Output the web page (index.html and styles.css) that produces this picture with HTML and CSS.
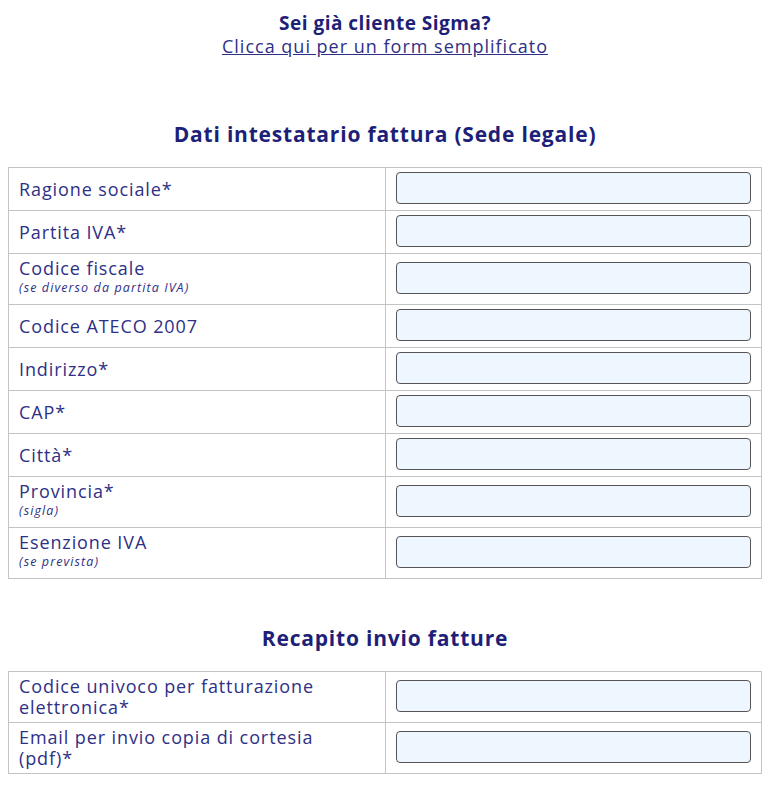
FILE: index.html
```html
<!DOCTYPE html>
<html lang="it">
<head>
  <meta charset="UTF-8" />
  <meta name="viewport" content="width=device-width, initial-scale=1.0" />
  <title>Dati fatturazione</title>
  <link rel="stylesheet" href="styles.css">
</head>
<body>
  <div class="intro">
    <div class="intro-title">Sei già cliente Sigma?</div>
    <a href="#" class="intro-link">Clicca qui per un form semplificato</a>
  </div>

  <h2 class="section-title first">Dati intestatario fattura (Sede legale)</h2>
  <table class="form-table">
    <tr>
      <td class="label">Ragione sociale*</td>
      <td class="field"><input type="text" /></td>
    </tr>
    <tr>
      <td class="label">Partita IVA*</td>
      <td class="field"><input type="text" /></td>
    </tr>
    <tr>
      <td class="label">Codice fiscale<span class="note">(se diverso da partita IVA)</span></td>
      <td class="field"><input type="text" /></td>
    </tr>
    <tr>
      <td class="label">Codice ATECO 2007</td>
      <td class="field"><input type="text" /></td>
    </tr>
    <tr>
      <td class="label">Indirizzo*</td>
      <td class="field"><input type="text" /></td>
    </tr>
    <tr>
      <td class="label">CAP*</td>
      <td class="field"><input type="text" /></td>
    </tr>
    <tr>
      <td class="label">Città*</td>
      <td class="field"><input type="text" /></td>
    </tr>
    <tr>
      <td class="label">Provincia*<span class="note">(sigla)</span></td>
      <td class="field"><input type="text" /></td>
    </tr>
    <tr>
      <td class="label">Esenzione IVA<span class="note">(se prevista)</span></td>
      <td class="field"><input type="text" /></td>
    </tr>
  </table>

  <h2 class="section-title">Recapito invio fatture</h2>
  <table class="form-table">
    <tr>
      <td class="label">Codice univoco per fatturazione elettronica*</td>
      <td class="field"><input type="text" /></td>
    </tr>
    <tr>
      <td class="label">Email per invio copia di cortesia (pdf)*</td>
      <td class="field"><input type="email" /></td>
    </tr>
  </table>
</body>
</html>
```

FILE: styles.css
```css
body {
  font-family: "Open Sans", "DejaVu Sans", sans-serif;
  background-color: #fff;
  margin: 8px;
  color: #2e3085;
}
.intro {
  text-align: center;
  padding-top: 3px;
}
.intro-title {
  font-size: 19px;
  font-weight: bold;
  letter-spacing: 0.5px;
  color: #1d1f78;
  line-height: 24px;
}
.intro-link {
  font-size: 18px;
  letter-spacing: 1px;
  color: #2e3085;
  line-height: 22px;
}
.section-title {
  text-align: center;
  font-size: 21px;
  font-weight: bold;
  letter-spacing: 0.8px;
  color: #1d1f78;
  margin: 0;
  line-height: 28px;
  padding: 45px 0 19px;
}
.section-title.first {
  padding-top: 62px;
}
.form-table {
  width: 100%;
  border-collapse: collapse;
  table-layout: fixed;
}
.form-table td {
  box-sizing: border-box;
  border: 1px solid #c4c4c4;
  vertical-align: middle;
}
.label {
  width: 50%;
  padding: 4px 30px 4px 10px;
  font-size: 18px;
  letter-spacing: 0.9px;
  line-height: 21px;
}
.note {
  display: block;
  font-size: 12.5px;
  font-style: italic;
  letter-spacing: 1.1px;
  line-height: 14px;
  margin-top: 2px;
  padding-bottom: 5px;
}
.field {
  padding: 4px 10px 6px;
}
.field input {
  display: block;
  box-sizing: border-box;
  width: 100%;
  height: 32px;
  margin: 0;
  background-color: #eef6ff;
  border: 1.5px solid #555;
  border-radius: 4px;
}
```
